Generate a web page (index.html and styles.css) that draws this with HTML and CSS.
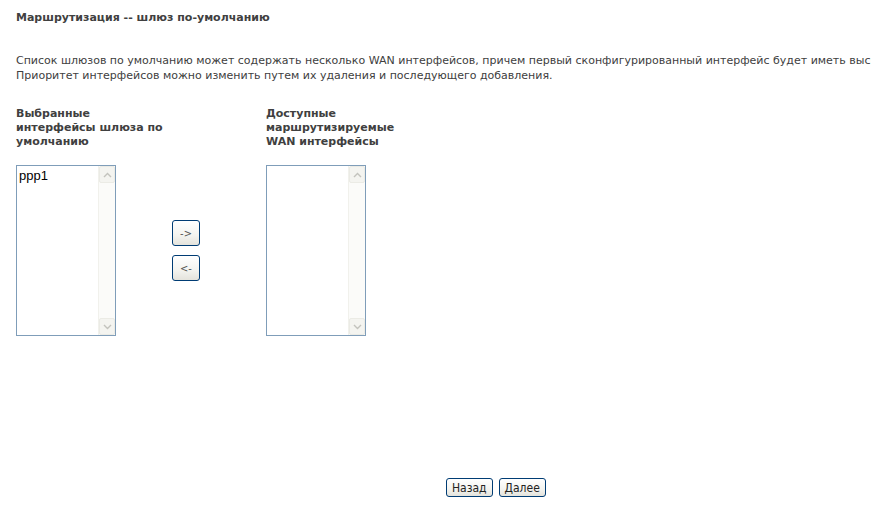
FILE: index.html
```html
<!DOCTYPE html>
<html lang="ru">
<head>
    <meta charset="UTF-8">
    <title>Маршрутизация -- шлюз по-умолчанию</title>
    <link rel="stylesheet" href="styles.css">
</head>
<body>
    <div class="page">
        <h1 class="title">Маршрутизация -- шлюз по-умолчанию</h1>

        <p class="intro">
            <span class="line">Список шлюзов по умолчанию может содержать несколько WAN интерфейсов, причем первый сконфигурированный интерфейс будет иметь высший приоритет.</span><br>
            <span class="line">Приоритет интерфейсов можно изменить путем их удаления и последующего добавления.</span>
        </p>

        <div class="lists">
            <div class="col">
                <h3 class="col-head">Выбранные<br>интерфейсы шлюза по<br>умолчанию</h3>
                <div class="listbox">
                    <div class="items">
                        <div class="item">ppp1</div>
                    </div>
                    <div class="scroll">
                        <span class="arrow">
                            <svg width="9" height="6" viewBox="0 0 9 6"><polyline points="1,5 4.5,1.5 8,5" fill="none" stroke="#c3c3bd" stroke-width="1.4"/></svg>
                        </span>
                        <span class="track"></span>
                        <span class="arrow">
                            <svg width="9" height="6" viewBox="0 0 9 6"><polyline points="1,1 4.5,4.5 8,1" fill="none" stroke="#c3c3bd" stroke-width="1.4"/></svg>
                        </span>
                    </div>
                </div>
            </div>

            <div class="moves">
                <button class="btn move">-&gt;</button>
                <button class="btn move">&lt;-</button>
            </div>

            <div class="col">
                <h3 class="col-head">Доступные<br>маршрутизируемые<br>WAN интерфейсы</h3>
                <div class="listbox">
                    <div class="items"></div>
                    <div class="scroll">
                        <span class="arrow">
                            <svg width="9" height="6" viewBox="0 0 9 6"><polyline points="1,5 4.5,1.5 8,5" fill="none" stroke="#c3c3bd" stroke-width="1.4"/></svg>
                        </span>
                        <span class="track"></span>
                        <span class="arrow">
                            <svg width="9" height="6" viewBox="0 0 9 6"><polyline points="1,1 4.5,4.5 8,1" fill="none" stroke="#c3c3bd" stroke-width="1.4"/></svg>
                        </span>
                    </div>
                </div>
            </div>
        </div>

        <div class="nav">
            <button class="btn nav-btn">Назад</button>
            <button class="btn nav-btn">Далее</button>
        </div>
    </div>
</body>
</html>
```

FILE: styles.css
```css
* {
    margin: 0;
    padding: 0;
    box-sizing: border-box;
}

body {
    font-family: "DejaVu Sans", Verdana, sans-serif;
    font-size: 11px;
    color: #404040;
    background: #fff;
}

.page {
    margin-left: 16px;
    padding-top: 11px;
}

.title {
    font-size: 11px;
    font-weight: bold;
    line-height: 14px;
    color: #404040;
}

/* the text is wider than the window, it gets cut at the right edge */
.intro {
    margin-top: 28px;
    line-height: 15px;
    white-space: nowrap;
    overflow: hidden;
}

.lists {
    display: grid;
    grid-template-columns: 156px 94px 150px;
    margin-top: 24px;
}

.col-head {
    font-size: 11px;
    font-weight: bold;
    line-height: 14px;
    color: #404040;
    height: 58px;
}

.moves {
    display: flex;
    flex-direction: column;
    justify-content: center;
    gap: 9px;
    padding-top: 58px;
}

.listbox {
    width: 100px;
    height: 171px;
    border: 1px solid #7f9db9;
    display: flex;
    background: #fff;
}

.items {
    flex: 1;
    padding: 2px 2px;
}

.item {
    font-family: "Liberation Sans", Arial, sans-serif;
    font-size: 13px;
    line-height: 16px;
    color: #000;
}

.scroll {
    width: 17px;
    display: flex;
    flex-direction: column;
    background: #fbfbf9;
    border-left: 1px solid #f1f1ec;
}

.arrow {
    height: 17px;
    display: flex;
    align-items: center;
    justify-content: center;
    background: #f4f4f0;
    border: 1px solid #ebebe5;
    border-radius: 2px;
}

.track {
    flex: 1;
}

.btn {
    font-family: "DejaVu Sans Condensed", "DejaVu Sans", sans-serif;
    font-stretch: condensed;
    border: 1px solid #003c74;
    border-radius: 3px;
    background: linear-gradient(#ffffff, #f3f3ef 60%, #e4e3dc);
    cursor: pointer;
}

.move {
    width: 28px;
    height: 26px;
    font-size: 11px;
    color: #555;
}

.nav {
    display: flex;
    gap: 6px;
    margin-top: 142px;
    padding-left: 430px;
}

.nav-btn {
    height: 19px;
    padding: 0 5px;
    font-size: 12px;
    color: #222;
}
```
